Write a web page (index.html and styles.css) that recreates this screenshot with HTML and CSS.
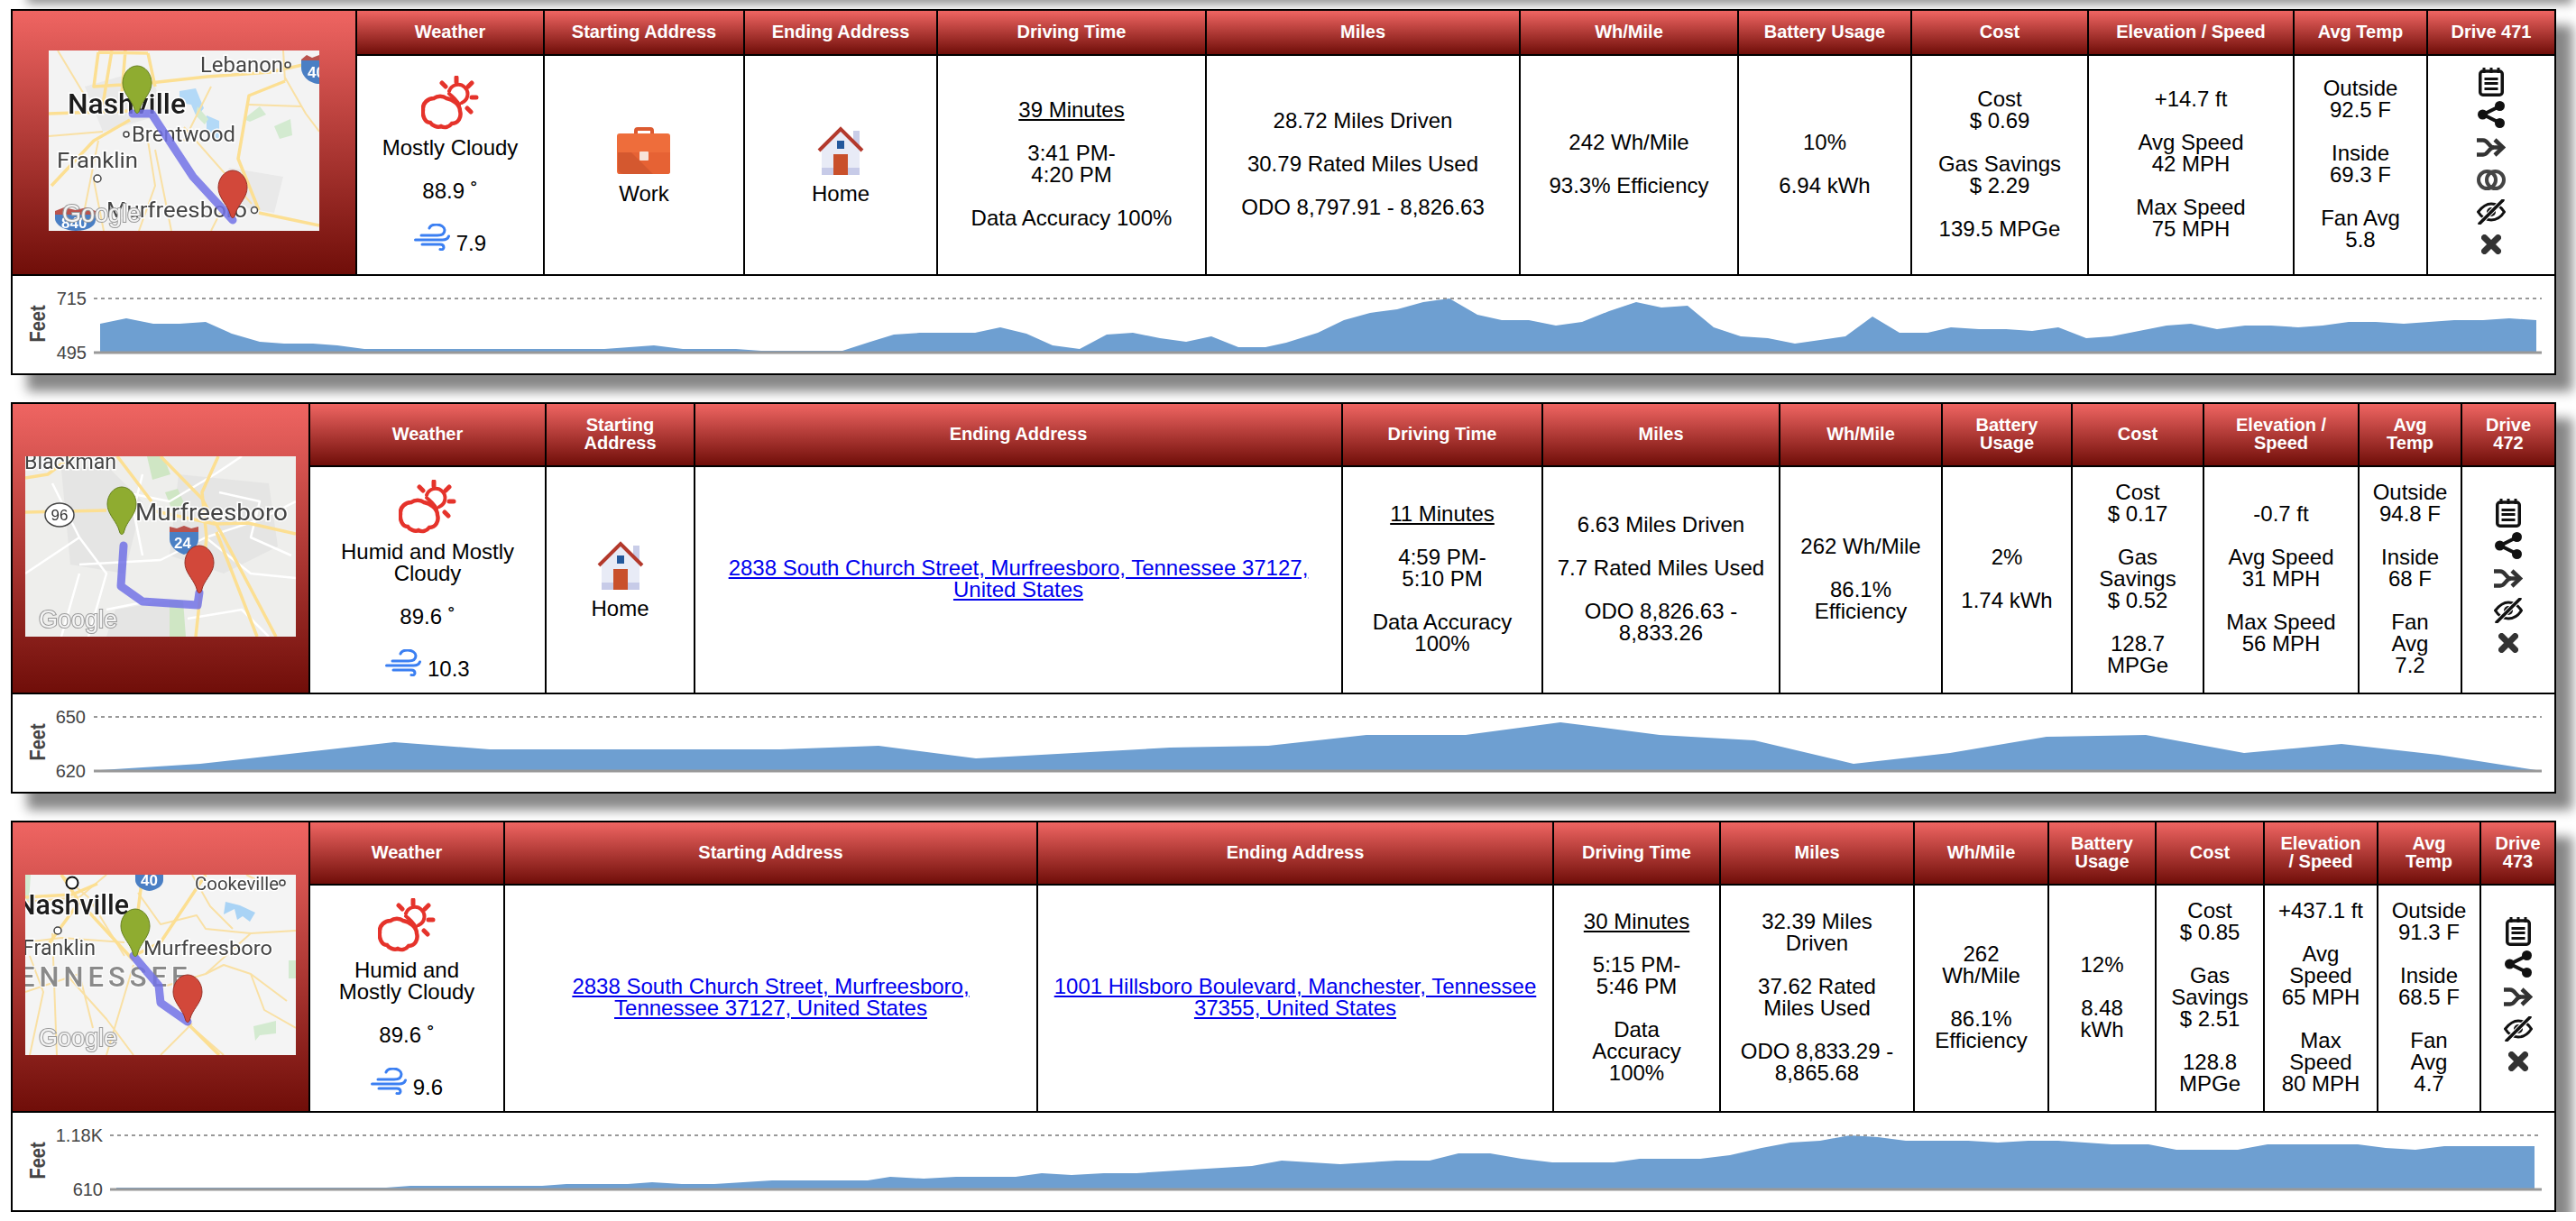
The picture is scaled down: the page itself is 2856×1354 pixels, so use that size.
FILE: index.html
```html
<!DOCTYPE html>
<html lang="en">
<head>
    <meta charset="UTF-8">
    <title>Drives</title>
    <link rel="stylesheet" href="styles.css">
</head>
<body>
<svg class="defs" aria-hidden="true">
    <symbol id="pin" viewBox="0 0 34 54">
        <path d="M17 1C8 1 1 10 1 20c0 10 8 17 12 26l2 6c1 2 3 2 4 0l2-6c4-9 12-16 12-26C33 10 26 1 17 1Z"/>
    </symbol>
    <symbol id="weather" viewBox="0 0 64 60">
        <g fill="none" stroke="#e5332b" stroke-linecap="round">
            <path stroke-width="4.500" d="M22 56C18 58 12 55 10 52 4 52 1 44 2 38 1 30 8 25 14 25 18 22 24 22 28 25 35 26 43 32 43 39 45 46 41 53 34 53 31 57 26 58 22 56Z"/>
            <path stroke-width="4" d="M31 17A10.500 10.500 0 1 1 45 30M31 20C35 23 39 27 42 32"/>
            <path stroke-width="5" d="M39 2v5M23 8l4 4M56 8l-4 4M56 24h5M51 36l4 4"/>
        </g>
    </symbol>
    <symbol id="wind" viewBox="0 0 40 30">
        <g fill="none" stroke="#3b7ff2" stroke-width="3" stroke-linecap="round">
            <path d="M17 5c1-3 5-4 8-4 5 0 9 3 9 6 0 4-3 6-8 6H8"/>
            <path d="M1.500 18h30c3 0 6-1 7-4"/>
            <path d="M9 23h20c3 0 4 2 4 3.500s-2 3-4 2"/>
        </g>
    </symbol>
    <symbol id="work" viewBox="0 0 60 52">
        <path d="M21 9V4a2 2 0 0 1 2-2h14a2 2 0 0 1 2 2v5" fill="none" stroke="#dc5a30" stroke-width="4"/>
        <rect y="7" width="59" height="45" rx="3" fill="#ee6d3b"/>
        <path d="M1 28h58v21a3 3 0 0 1-3 3H2a3 3 0 0 1-1-3Z" fill="#e66234"/>
        <path d="M1 28h15l24 24H8a7 7 0 0 1-7-7Z" fill="#d4582f"/>
        <rect x="25" y="27" width="10" height="10" rx="1" fill="#f7e3d8"/>
    </symbol>
    <symbol id="home" viewBox="0 0 52 54">
        <rect x="40" y="5" width="7" height="16" fill="#c9cde8"/>
        <path d="M5 24 26 3l21 21v30H5Z" fill="#e8ebf6"/>
        <rect x="5" y="46" width="42" height="8" fill="#c7cbe8"/>
        <path d="M2 27 26 3l24 24" fill="none" stroke="#b3392c" stroke-width="4"/>
        <rect x="22" y="16" width="8" height="9" fill="#23589c"/>
        <rect x="18" y="31" width="16" height="23" fill="#c9502b"/>
    </symbol>
    <symbol id="note" viewBox="0 0 28 32">
        <g fill="none" stroke="#111">
            <rect x="1.750" y="4" width="24.500" height="26.250" rx="3" stroke-width="3.500"/>
            <path stroke-width="3" d="M6 0v6M14 0v6M22 0v6"/>
            <path stroke-width="3" d="M6.500 12.500h15M6.500 17.500h15M6.500 23.500h15"/>
        </g>
    </symbol>
    <symbol id="share" viewBox="0 0 30 30">
        <g fill="#111">
            <circle cx="24.500" cy="5.500" r="5.500"/>
            <circle cx="5.500" cy="15" r="5.500"/>
            <circle cx="24.500" cy="24.500" r="5.500"/>
        </g>
        <path d="M24 6 6 15l18 9" fill="none" stroke="#111" stroke-width="4"/>
    </symbol>
    <symbol id="shuffle" viewBox="0 0 32 21">
        <g fill="none" stroke="#333" stroke-width="4.500">
            <path d="M0 2.500h7c6 0 6 8 12 8h10"/>
            <path d="M0 18.500h7c6 0 6-8 12-8"/>
            <path d="m20 2 9 8.500-9 8.500"/>
        </g>
    </symbol>
    <symbol id="link" viewBox="0 0 32 23">
        <g fill="none" stroke="#444" stroke-width="4">
            <circle cx="11.500" cy="11.500" r="9.500"/>
            <circle cx="20.500" cy="11.500" r="9.500"/>
        </g>
    </symbol>
    <symbol id="eye" viewBox="0 0 32 28">
        <path d="M1.500 14C7 7 12 5 16 5s10 2 14.500 9C26 21 20 23 16 23S6 21 1.500 14Z" fill="none" stroke="#111" stroke-width="3"/>
        <circle cx="16" cy="14" r="5" fill="#111"/>
        <path d="M3 27 29 1" stroke="#fff" stroke-width="5.500"/>
        <path d="M3 27 29 1" stroke="#111" stroke-width="3.500" stroke-linecap="round"/>
    </symbol>
    <symbol id="close" viewBox="0 0 22 22">
        <path d="m3.500 3.500 15 15m0-15-15 15" stroke="#333" stroke-width="7" stroke-linecap="round"/>
    </symbol>
</svg>

<div class="page">
    <div class="stub"></div>

    <!-- drive 471 -->
    <section class="card cols-471">
        <div class="map-cell">
            <svg class="map" viewBox="0 0 300 200">
                <rect width="300" height="200" fill="#f3f3f3"/>
                <path d="M40 40 110 20 130 70 60 90ZM200 130l60 10-10 40-60-10Z" fill="#e9e9e9"/>
                <path d="M145 45l18-3 9 22-8 10-6-14-13-2Z" fill="#b3d9f7"/>
                <path d="M175 72l14 6 0 20-14-4Z" fill="#b3d9f7"/>
                <path d="M216 76l18-14 7 9-18 8ZM250 84l18-8 2 18-14 4ZM165 62l12 14-4 6-10-10Z" fill="#d3ead0"/>
                <g class="road">
                    <path d="M112 36 176 29 245 24 300 12"/>
                    <path d="M0 70 90 67"/>
                    <path d="M55 2 110 3M55 2 50 40 112 36M70 0 60 60M110 3 118 40M85 0 80 60"/>
                    <path d="M90 77 50 100 3 150"/>
                    <path d="M262 34 222 50 210 120 233 177"/>
                    <path d="M233 180 300 194"/>
                </g>
                <g class="road thin">
                    <path d="M118 110 136 200M50 144 61 200M55 100 35 200M0 95 60 90M150 85 225 170"/>
                    <path d="M262 30 285 70 300 90M222 60 280 62M180 40 150 100M10 0 40 50M190 180 180 200M260 0 262 34M110 100 118 150 100 200"/>
                </g>
                <text class="label strong" x="21" y="70" font-size="31" textLength="131" lengthAdjust="spacingAndGlyphs">Nashville</text>
                <text class="label" x="168" y="24" font-size="23" textLength="92" lengthAdjust="spacingAndGlyphs">Lebanon</text>
                <circle class="dot" cx="265" cy="16" r="3"/>
                <circle class="dot" cx="86" cy="93" r="3"/>
                <text class="label" x="92" y="101" font-size="23" textLength="115" lengthAdjust="spacingAndGlyphs">Brentwood</text>
                <text class="label" x="9" y="130" font-size="24" textLength="90" lengthAdjust="spacingAndGlyphs">Franklin</text>
                <circle class="dot" cx="54" cy="142" r="4"/>
                <path class="shield-blue" d="M280 10h20v27c-10 0-20-8-20-18Z"/>
                <path class="shield-red" d="M280 10l6-5 6 3 8-3v6h-20Z"/>
                <text class="shield-text" x="287" y="30" font-size="17">40</text>
                <path class="shield-blue" d="M7 178h45v10c0 8-11 12-22 12S7 194 7 186Z"/>
                <path class="shield-red" d="M7 178l10-4 13 3 12-3 10 4v4H7Z"/>
                <text class="shield-text" x="14" y="197" font-size="17">840</text>
                <text class="label" x="64" y="185" font-size="24" textLength="156" lengthAdjust="spacingAndGlyphs">Murfreesboro</text>
                <circle class="dot" cx="228" cy="177" r="3.500"/>
                <path class="route" d="M93 70H114L160 140 204 188"/>
                <use class="pin-green" href="#pin" x="81" y="16" width="34" height="54"/>
                <use class="pin-red" href="#pin" x="187" y="131" width="34" height="56"/>
                <text class="google" x="15" y="190" font-size="27">Google</text>
            </svg>
        </div>
        <div class="th">Weather</div>
        <div class="th">Starting Address</div>
        <div class="th">Ending Address</div>
        <div class="th">Driving Time</div>
        <div class="th">Miles</div>
        <div class="th">Wh/Mile</div>
        <div class="th">Battery Usage</div>
        <div class="th">Cost</div>
        <div class="th">Elevation / Speed</div>
        <div class="th">Avg Temp</div>
        <div class="th">Drive 471</div>

        <div class="td icon-cell">
            <div>
                <svg class="icon-weather"><use href="#weather"/></svg>
                Mostly Cloudy<br><br>
                88.9 ˚<br><br>
                <svg class="icon-wind"><use href="#wind"/></svg> 7.9
            </div>
        </div>
        <div class="td icon-cell"><div><svg class="icon-place"><use href="#work"/></svg>Work</div></div>
        <div class="td icon-cell"><div><svg class="icon-place"><use href="#home"/></svg>Home</div></div>
        <div class="td"><div><u>39 Minutes</u><br><br>3:41 PM-<br>4:20 PM<br><br>Data Accuracy 100%</div></div>
        <div class="td"><div>28.72 Miles Driven<br><br>30.79 Rated Miles Used<br><br>ODO 8,797.91 - 8,826.63</div></div>
        <div class="td"><div>242 Wh/Mile<br><br>93.3% Efficiency</div></div>
        <div class="td"><div>10%<br><br>6.94 kWh</div></div>
        <div class="td"><div>Cost<br>$ 0.69<br><br>Gas Savings<br>$ 2.29<br><br>139.5 MPGe</div></div>
        <div class="td"><div>+14.7 ft<br><br>Avg Speed<br>42 MPH<br><br>Max Speed<br>75 MPH</div></div>
        <div class="td"><div>Outside<br>92.5 F<br><br>Inside<br>69.3 F<br><br>Fan Avg<br>5.8</div></div>
        <div class="td actions">
            <span class="act"><svg class="i-note"><use href="#note"/></svg></span>
            <span class="act"><svg class="i-share"><use href="#share"/></svg></span>
            <span class="act"><svg class="i-shuffle"><use href="#shuffle"/></svg></span>
            <span class="act"><svg class="i-link"><use href="#link"/></svg></span>
            <span class="act"><svg class="i-eye"><use href="#eye"/></svg></span>
            <span class="act"><svg class="i-close"><use href="#close"/></svg></span>
        </div>

        <div class="chart-cell">
            <svg class="chart">
                <text class="axis-title" transform="translate(36 53) rotate(-90) scale(1 1.200)">Feet</text>
                <text class="tick" x="82" y="32">715</text>
                <text class="tick" x="82" y="92">495</text>
                <polygon class="area" points="97,85 97,53 126,47 156,53 185,53 214,51 243,64 274,73 301,75 333,75 360,77 390,81 656,81 711,77 743,81 802,81 830,83 920,83 951,73 977,65 1006,63 1067,63 1095,57 1124,64 1153,77 1183,81 1213,65 1242,63 1272,69 1301,73 1329,67 1359,79 1389,79 1412,74 1447,63 1476,49 1505,41 1535,37 1564,29 1593,25 1624,43 1651,49 1681,49 1711,55 1740,51 1770,39 1800,29 1828,35 1857,33 1886,57 1916,67 1946,69 1976,75 2032,67 2062,45 2092,63 2123,63 2149,57 2180,59 2210,59 2239,61 2268,57 2299,69 2327,67 2388,55 2415,53 2444,59 2475,55 2504,55 2534,57 2561,55 2590,51 2620,51 2651,53 2707,49 2739,49 2768,47 2798,49 2798,85"/>
                <line class="grid-top" x1="90" y1="25" x2="2804" y2="25"/>
                <line class="grid-base" x1="90" y1="85" x2="2804" y2="85"/>
            </svg>
        </div>
    </section>

    <!-- drive 472 -->
    <section class="card cols-472">
        <div class="map-cell">
            <svg class="map" viewBox="0 0 300 200">
                <rect width="300" height="200" fill="#eeeeec"/>
                <path d="M40 15 90 10 130 50 110 130 50 120ZM170 20 270 30 280 100 220 130 160 110ZM100 170l60-10 10 40H90Z" fill="#e5e5e4"/>
                <path d="M135 0h18l8 20-20 6ZM160 160h15l3 40h-18ZM155 40l14-4 8 18-14 6Z" fill="#cfe6c4"/>
                <g class="street">
                    <path d="M30 30 60 90 90 130 70 200M0 130 60 90M60 120 150 115 200 90 260 70 300 50M110 40 160 50 210 20 240 0M200 90 250 130 300 135"/>
                    <path d="M130 20 120 60 130 110M215 40 260 50 250 90 295 110M40 200 60 130M180 180 240 170 270 200M90 170 140 160"/>
                </g>
                <g class="road">
                    <path d="M0 24 25 20 45 5 50 0"/>
                    <path d="M0 62 90 60"/>
                    <path d="M102 0 140 50"/>
                    <path d="M150 0 196 47 220 90 278 200"/>
                    <path d="M214 0 196 40 201 90 189 200"/>
                    <path d="M212 84 257 200"/>
                    <path d="M140 60 210 75 247 74 300 86"/>
                </g>
                <path class="shield-blue" d="M160 84h32v8c0 8-8 14-16 17-8-3-16-9-16-17Z"/>
                <path class="shield-red" d="M160 84l0-6 8 2 8-3 8 3 8-2v6Z"/>
                <text class="shield-text" x="165" y="102" font-size="17">24</text>
                <ellipse cx="38" cy="65" rx="16" ry="13" fill="#fff" stroke="#444" stroke-width="1.500"/>
                <text class="route-num" x="38" y="71" font-size="17">96</text>
                <text class="label" x="-1" y="14" font-size="24" textLength="102" lengthAdjust="spacingAndGlyphs">Blackman</text>
                <text class="label" x="122" y="71" font-size="26" textLength="169" lengthAdjust="spacingAndGlyphs">Murfreesboro</text>
                <path class="route" d="M109 99 106 144 130 161 191 165 193 151"/>
                <use class="pin-green" href="#pin" x="90" y="33" width="34" height="54"/>
                <use class="pin-red" href="#pin" x="176" y="97" width="34" height="56"/>
                <text class="google" x="15" y="190" font-size="27">Google</text>
            </svg>
        </div>
        <div class="th">Weather</div>
        <div class="th">Starting Address</div>
        <div class="th">Ending Address</div>
        <div class="th">Driving Time</div>
        <div class="th">Miles</div>
        <div class="th">Wh/Mile</div>
        <div class="th">Battery Usage</div>
        <div class="th">Cost</div>
        <div class="th">Elevation / Speed</div>
        <div class="th">Avg Temp</div>
        <div class="th">Drive 472</div>

        <div class="td icon-cell">
            <div>
                <svg class="icon-weather"><use href="#weather"/></svg>
                Humid and Mostly Cloudy<br><br>
                89.6 ˚<br><br>
                <svg class="icon-wind"><use href="#wind"/></svg> 10.3
            </div>
        </div>
        <div class="td icon-cell"><div><svg class="icon-place"><use href="#home"/></svg>Home</div></div>
        <div class="td"><div><a href="#">2838 South Church Street, Murfreesboro, Tennessee 37127, United States</a></div></div>
        <div class="td"><div><u>11 Minutes</u><br><br>4:59 PM-<br>5:10 PM<br><br>Data Accuracy 100%</div></div>
        <div class="td"><div>6.63 Miles Driven<br><br>7.7 Rated Miles Used<br><br>ODO 8,826.63 - 8,833.26</div></div>
        <div class="td"><div>262 Wh/Mile<br><br>86.1% Efficiency</div></div>
        <div class="td"><div>2%<br><br>1.74 kWh</div></div>
        <div class="td"><div>Cost<br>$ 0.17<br><br>Gas Savings<br>$ 0.52<br><br>128.7 MPGe</div></div>
        <div class="td"><div>-0.7 ft<br><br>Avg Speed<br>31 MPH<br><br>Max Speed<br>56 MPH</div></div>
        <div class="td"><div>Outside<br>94.8 F<br><br>Inside<br>68 F<br><br>Fan Avg<br>7.2</div></div>
        <div class="td actions">
            <span class="act"><svg class="i-note"><use href="#note"/></svg></span>
            <span class="act"><svg class="i-share"><use href="#share"/></svg></span>
            <span class="act"><svg class="i-shuffle"><use href="#shuffle"/></svg></span>
            <span class="act"><svg class="i-eye"><use href="#eye"/></svg></span>
            <span class="act"><svg class="i-close"><use href="#close"/></svg></span>
        </div>

        <div class="chart-cell">
            <svg class="chart">
                <text class="axis-title" transform="translate(36 53) rotate(-90) scale(1 1.200)">Feet</text>
                <text class="tick" x="81" y="32">650</text>
                <text class="tick" x="81" y="92">620</text>
                <polygon class="area" points="97,85 97,84 208,77 423,53 529,61 851,61 960,57 1068,71 1283,59 1392,57 1501,45 1611,45 1716,31 1826,45 1931,51 2041,77 2148,65 2255,47 2365,45 2474,65 2582,55 2689,67 2798,84 2798,85"/>
                <line class="grid-top" x1="90" y1="25" x2="2804" y2="25"/>
                <line class="grid-base" x1="90" y1="85" x2="2804" y2="85"/>
            </svg>
        </div>
    </section>

    <!-- drive 473 -->
    <section class="card cols-473">
        <div class="map-cell">
            <svg class="map" viewBox="0 0 300 200">
                <rect width="300" height="200" fill="#f4f4f4"/>
                <path d="M222 30l16 4 17 8-6 10-8-6-6 4-3-12-12 6Z" fill="#a9d3f5"/>
                <path d="M253 168l25-6 0 14-18 2-5 6ZM0 0h6l-2 30H0ZM292 95h8v20h-8Z" fill="#d3ead0"/>
                <g class="road thin">
                    <path d="M0 30 60 25 90 0M40 0 70 25 110 90M125 20 150 55 190 45 200 60 250 65 300 62M0 75 40 70 110 75"/>
                    <path d="M30 65 35 200M5 90 20 130 5 200M45 110 90 160 120 200M120 100 90 200M180 165 220 200M0 130 60 110 75 170M200 110 220 100 250 110 290 140"/>
                    <path d="M150 125 200 110 250 65M250 110 265 150 300 170M185 165 150 200M245 0 275 15M185 0 205 35 230 60"/>
                </g>
                <g class="road">
                    <path d="M40 0 60 30 120 95M0 25 52 22 80 10M130 0 125 40 122 90M60 30 20 85"/>
                    <path d="M180 165 215 200M120 90 150 75 200 0"/>
                </g>
                <path class="shield-blue" d="M122 0h31v6c0 6-7 11-15.500 12C129 17 122 12 122 6Z"/>
                <text class="shield-text" x="128" y="12" font-size="17">40</text>
                <circle cx="52" cy="9" r="6.500" fill="#fff" stroke="#111" stroke-width="2"/>
                <circle class="dot" cx="36" cy="62" r="4"/>
                <text class="label strong" x="-10" y="44" font-size="31" textLength="125" lengthAdjust="spacingAndGlyphs">Nashville</text>
                <text class="label" x="188" y="17" font-size="21" textLength="93" lengthAdjust="spacingAndGlyphs">Cookeville</text>
                <circle class="dot" cx="285" cy="9" r="3"/>
                <text class="label" x="-3" y="89" font-size="24" textLength="81" lengthAdjust="spacingAndGlyphs">Franklin</text>
                <text class="state" x="-31" y="124">TENNESSEE</text>
                <text class="label" x="131" y="89" font-size="22" textLength="143" lengthAdjust="spacingAndGlyphs">Murfreesboro</text>
                <path class="route" d="M120 90 148 123 150 142 180 163"/>
                <use class="pin-green" href="#pin" x="105" y="37" width="34" height="54"/>
                <use class="pin-red" href="#pin" x="163" y="109" width="34" height="56"/>
                <text class="google" x="15" y="190" font-size="27">Google</text>
            </svg>
        </div>
        <div class="th">Weather</div>
        <div class="th">Starting Address</div>
        <div class="th">Ending Address</div>
        <div class="th">Driving Time</div>
        <div class="th">Miles</div>
        <div class="th">Wh/Mile</div>
        <div class="th">Battery Usage</div>
        <div class="th">Cost</div>
        <div class="th">Elevation / Speed</div>
        <div class="th">Avg Temp</div>
        <div class="th">Drive 473</div>

        <div class="td icon-cell">
            <div>
                <svg class="icon-weather"><use href="#weather"/></svg>
                Humid and Mostly Cloudy<br><br>
                89.6 ˚<br><br>
                <svg class="icon-wind"><use href="#wind"/></svg> 9.6
            </div>
        </div>
        <div class="td"><div><a href="#">2838 South Church Street, Murfreesboro,<br>Tennessee 37127, United States</a></div></div>
        <div class="td"><div><a href="#">1001 Hillsboro Boulevard, Manchester, Tennessee 37355, United States</a></div></div>
        <div class="td"><div><u>30 Minutes</u><br><br>5:15 PM-<br>5:46 PM<br><br>Data<br>Accuracy<br>100%</div></div>
        <div class="td"><div>32.39 Miles Driven<br><br>37.62 Rated Miles Used<br><br>ODO 8,833.29 - 8,865.68</div></div>
        <div class="td"><div>262 Wh/Mile<br><br>86.1% Efficiency</div></div>
        <div class="td"><div>12%<br><br>8.48 kWh</div></div>
        <div class="td"><div>Cost<br>$ 0.85<br><br>Gas Savings<br>$ 2.51<br><br>128.8 MPGe</div></div>
        <div class="td"><div>+437.1 ft<br><br>Avg Speed<br>65 MPH<br><br>Max Speed<br>80 MPH</div></div>
        <div class="td"><div>Outside<br>91.3 F<br><br>Inside<br>68.5 F<br><br>Fan Avg<br>4.7</div></div>
        <div class="td actions">
            <span class="act"><svg class="i-note"><use href="#note"/></svg></span>
            <span class="act"><svg class="i-share"><use href="#share"/></svg></span>
            <span class="act"><svg class="i-shuffle"><use href="#shuffle"/></svg></span>
            <span class="act"><svg class="i-eye"><use href="#eye"/></svg></span>
            <span class="act"><svg class="i-close"><use href="#close"/></svg></span>
        </div>

        <div class="chart-cell">
            <svg class="chart">
                <text class="axis-title" transform="translate(36 53) rotate(-90) scale(1 1.200)">Feet</text>
                <text class="tick" x="100" y="32">1.18K</text>
                <text class="tick" x="100" y="92">610</text>
                <polygon class="area" points="115,85 115,83 414,83 441,81 587,81 614,79 682,79 709,77 742,79 778,79 842,75 948,75 973,71 1010,73 1046,71 1112,71 1141,67 1174,69 1210,67 1246,67 1307,63 1374,59 1407,53 1472,57 1534,53 1571,53 1603,45 1638,45 1673,51 1707,55 1775,55 1804,51 1871,51 1904,47 1939,39 1971,33 2004,31 2037,25 2068,27 2099,31 2168,31 2201,33 2235,31 2268,31 2327,35 2368,35 2399,41 2467,41 2500,35 2600,35 2631,39 2664,41 2696,37 2796,37 2796,85"/>
                <line class="grid-top" x1="108" y1="25" x2="2804" y2="25"/>
                <line class="grid-base" x1="108" y1="85" x2="2804" y2="85"/>
            </svg>
        </div>
    </section>
</div>
</body>
</html>
```

FILE: styles.css
```css
html, body {
    margin: 0;
    background: #fff;
}
body {
    font-family: "Liberation Sans", Arial, sans-serif;
    font-size: 24px;
    line-height: 24px;
    color: #000;
}
a {
    color: #00e;
}
.defs {
    position: absolute;
    width: 0;
    height: 0;
}
.page {
    display: flow-root;
    padding: 0 22px 0 12px;
}
/* shadow of the card scrolled off above */
.stub {
    height: 14px;
    margin: -28px 0 24px;
    box-shadow: 18px 18px 12px #888;
}
.card {
    display: grid;
    gap: 2px;
    border: 2px solid #000;
    background: #000;
    box-shadow: 18px 18px 12px #888;
}
.card + .card {
    margin-top: 30px;
}
.cols-471 {
    grid-template-columns: 380px 206px 220px 212px 296px 346px 240px 190px 194px 226px 146px 140px;
    grid-template-rows: auto 242px 108px;
}
.cols-472 {
    grid-template-columns: 328px 260px 163px 716px 220px 261px 178px 142px 144px 170px 112px 102px;
    grid-template-rows: auto 250px 108px;
}
.cols-473 {
    grid-template-columns: 328px 214px 589px 570px 183px 213px 147px 117px 118px 124px 112px 81px;
    grid-template-rows: auto 250px 108px;
}
.map-cell {
    grid-row: 1 / 3;
    display: flex;
    align-items: center;
    justify-content: center;
    padding-bottom: 4px;
    background: linear-gradient(#ef6562, #700e09);
}
.th {
    display: flex;
    align-items: center;
    justify-content: center;
    padding: 13px 14px 15px;
    background: linear-gradient(#ef6562, #700e09);
    color: #fff;
    font-size: 20px;
    line-height: 20px;
    font-weight: bold;
    text-align: center;
}
.td {
    display: flex;
    align-items: center;
    justify-content: center;
    padding: 0 14px 3px;
    background: #fff;
    text-align: center;
}
.td.icon-cell {
    padding-bottom: 0;
}
.chart-cell {
    grid-column: 1 / -1;
    background: #fff;
}

/* map pictures */
.map {
    display: block;
    width: 300px;
    height: 200px;
    filter: blur(.4px);
}
.road, .street {
    fill: none;
    stroke-linejoin: round;
}
.road {
    stroke: #fcdf92;
    stroke-width: 3.5px;
}
.road.thin {
    stroke: #f9e0a4;
    stroke-width: 2px;
}
.street {
    stroke: #fff;
    stroke-width: 2.5px;
}
.route {
    fill: none;
    stroke: #7272e6;
    stroke-opacity: .85;
    stroke-width: 9px;
    stroke-linejoin: round;
    stroke-linecap: round;
}
.pin-green {
    fill: #8fac30;
    stroke: #66801f;
}
.pin-red {
    fill: #d2483a;
    stroke: #973027;
}
.label {
    font-family: Roboto, "Liberation Sans", sans-serif;
    fill: #444;
    stroke: #fff;
    stroke-width: 3px;
    paint-order: stroke;
}
.label.strong {
    font-weight: 500;
    fill: #1c1c1c;
}
.dot {
    fill: #fff;
    stroke: #444;
    stroke-width: 1.5px;
}
.state {
    font-family: Roboto, "Liberation Sans", sans-serif;
    font-size: 31px;
    font-weight: 500;
    letter-spacing: 5px;
    fill: #8a8a8a;
    stroke: #fff;
    stroke-width: 2px;
    paint-order: stroke;
}
.google {
    font-family: "Liberation Sans", sans-serif;
    fill: #f4f4f4;
    stroke: #999;
    stroke-width: 2px;
    paint-order: stroke;
}
.shield-blue {
    fill: #4a7fc4;
}
.shield-red {
    fill: #b9534d;
}
.shield-text {
    font-family: "Liberation Sans", sans-serif;
    font-weight: bold;
    fill: #fff;
}
.route-num {
    font-family: "Liberation Sans", sans-serif;
    fill: #333;
    text-anchor: middle;
}

/* cell icons */
.icon-weather {
    display: block;
    width: 64px;
    height: 60px;
    margin: 0 auto 8px;
    filter: blur(.5px);
}
.icon-wind {
    width: 40px;
    height: 30px;
}
.icon-place {
    display: block;
    width: 60px;
    height: 54px;
    margin: 0 auto 9px;
}
.td.actions {
    flex-direction: column;
    padding-bottom: 4px;
}
.act {
    display: flex;
    align-items: center;
    justify-content: center;
    height: 36px;
}
.i-note {
    width: 28px;
    height: 32px;
}
.i-share {
    width: 30px;
    height: 30px;
}
.i-shuffle {
    width: 32px;
    height: 21px;
}
.i-link {
    width: 32px;
    height: 23px;
}
.i-eye {
    width: 32px;
    height: 28px;
}
.i-close {
    width: 22px;
    height: 22px;
}

/* elevation charts */
.chart {
    display: block;
    width: 2818px;
    height: 108px;
}
.axis-title {
    font-size: 20px;
    font-weight: bold;
    fill: #444;
    text-anchor: middle;
}
.tick {
    font-size: 20px;
    fill: #444;
    text-anchor: end;
}
.area {
    fill: #6e9fd1;
}
.grid-top {
    stroke: #999;
    stroke-width: 2px;
    stroke-dasharray: 4 4;
}
.grid-base {
    stroke: #999;
    stroke-width: 3px;
}
```
